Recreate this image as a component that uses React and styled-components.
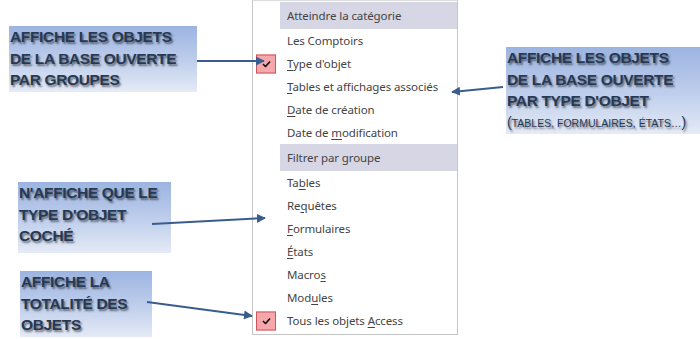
import React from 'react';
import styled, { createGlobalStyle } from 'styled-components';

const GlobalStyle = createGlobalStyle`
  html, body {
    margin: 0;
    padding: 0;
    background: #fff;
  }
`;

const Page = styled.div`
  position: relative;
  width: 700px;
  height: 339px;
  display: flex;
  overflow: hidden;
  background: #fff;
`;

const SideColumn = styled.div`
  display: flex;
  flex-direction: column;
  align-items: flex-start;
  width: ${props => props.width || 'auto'};
  flex: ${props => (props.grow ? 1 : 'none')};
`;

const Callout = styled.div`
  margin-top: ${props => props.top}px;
  margin-left: ${props => props.left}px;
  width: ${props => props.width}px;
  height: ${props => props.height}px;
  box-sizing: border-box;
  padding: 0 0 0 ${props => props.pad || 1}px;
  background: linear-gradient(to bottom, #9cb4e1 0%, #c0cfec 55%, #e5ebf6 100%);
  font-family: "Liberation Sans", Arial, sans-serif;
  font-weight: bold;
  font-size: 15.5px;
  line-height: 21.5px;
  letter-spacing: -0.35px;
  color: #263954;
  text-shadow: 1.5px 1.5px 2px rgba(0, 0, 0, 0.5);
  white-space: nowrap;
`;

const SmallNote = styled.div`
  font-weight: normal;
  font-size: 10.5px;
  line-height: 20px;
  letter-spacing: 0;
  span {
    font-size: 14px;
  }
`;

const Menu = styled.div`
  width: 207px;
  height: 335px;
  box-sizing: border-box;
  border: 1px solid #c6c6c6;
  border-top-color: #dcdcdc;
  padding: 1px 0;
  background: #fff;
  font-family: "Noto Sans", "Open Sans", sans-serif;
  font-size: 11.5px;
  letter-spacing: -0.1px;
  color: #444;
`;

const Header = styled.div`
  margin-left: 27px;
  height: 27px;
  display: flex;
  align-items: center;
  padding-left: 7px;
  background: #d6d6e4;
`;

const Item = styled.div`
  position: relative;
  height: 23px;
  display: flex;
  align-items: center;
  padding-left: 34px;
  u {
    text-decoration: underline;
    text-underline-offset: 2px;
  }
`;

const CheckBox = styled.span`
  position: absolute;
  left: 3px;
  top: 50%;
  transform: translateY(-50%);
  width: 20px;
  height: 19px;
  box-sizing: border-box;
  border: 1px solid #cf555d;
  background: #f5a7ac;
  display: flex;
  align-items: center;
  justify-content: center;
`;

const Arrows = styled.svg`
  position: absolute;
  left: 0;
  top: 0;
  pointer-events: none;
`;

const Check = () => (
  <CheckBox>
    <svg width="9" height="7" viewBox="0 0 9 7">
      <path d="M1 3.5 L3.5 6 L8 1" fill="none" stroke="#111" strokeWidth="1.6" />
    </svg>
  </CheckBox>
);

const MenuItem = ({ checked, children }) => (
  <Item>
    {checked && <Check />}
    <span>{children}</span>
  </Item>
);

const arrows = [
  { x1: 197, y1: 61, x2: 264, y2: 61 },
  { x1: 503, y1: 87, x2: 452, y2: 92 },
  { x1: 152, y1: 224, x2: 265, y2: 218 },
  { x1: 147, y1: 302, x2: 252, y2: 316 },
];

export default function App() {
  return (
    <>
      <GlobalStyle />
      <Page>
        <SideColumn width="252px">
          <Callout top={26} left={9} width={188} height={66}>
            AFFICHE LES OBJETS<br />DE LA BASE OUVERTE<br />PAR GROUPES
          </Callout>
          <Callout top={90} left={18} width={153} height={71}>
            N'AFFICHE QUE LE<br />TYPE D'OBJET<br />COCHÉ
          </Callout>
          <Callout top={18} left={20} width={132} height={66}>
            AFFICHE LA<br />TOTALITÉ DES<br />OBJETS
          </Callout>
        </SideColumn>

        <Menu>
          <Header>Atteindre la catégorie</Header>
          <MenuItem>Les Comptoirs</MenuItem>
          <MenuItem checked><u>T</u>ype d'objet</MenuItem>
          <MenuItem><u>T</u>ables et affichages associés</MenuItem>
          <MenuItem><u>D</u>ate de création</MenuItem>
          <MenuItem>Date de <u>m</u>odification</MenuItem>
          <Header>Filtrer par groupe</Header>
          <MenuItem>Ta<u>b</u>les</MenuItem>
          <MenuItem>Re<u>q</u>uêtes</MenuItem>
          <MenuItem><u>F</u>ormulaires</MenuItem>
          <MenuItem><u>É</u>tats</MenuItem>
          <MenuItem>Macro<u>s</u></MenuItem>
          <MenuItem>Mod<u>u</u>les</MenuItem>
          <MenuItem checked>Tous les objets <u>A</u>ccess</MenuItem>
        </Menu>

        <SideColumn grow>
          <Callout top={47} left={48} width={194} height={87}>
            AFFICHE LES OBJETS<br />DE LA BASE OUVERTE<br />PAR TYPE D'OBJET
            <SmallNote><span>(</span>TABLES, FORMULAIRES, ÉTATS…<span>)</span></SmallNote>
          </Callout>
        </SideColumn>

        <Arrows width="700" height="339" viewBox="0 0 700 339">
          <defs>
            <marker id="head" viewBox="0 0 10 10" refX="9" refY="5" markerWidth="4.5" markerHeight="4.5" orient="auto">
              <path d="M0 0 L10 5 L0 10 Z" fill="#3a5d8f" />
            </marker>
          </defs>
          {arrows.map((a, i) => (
            <line key={i} x1={a.x1} y1={a.y1} x2={a.x2} y2={a.y2} stroke="#3a5d8f" strokeWidth="2" markerEnd="url(#head)" />
          ))}
        </Arrows>
      </Page>
    </>
  );
}
